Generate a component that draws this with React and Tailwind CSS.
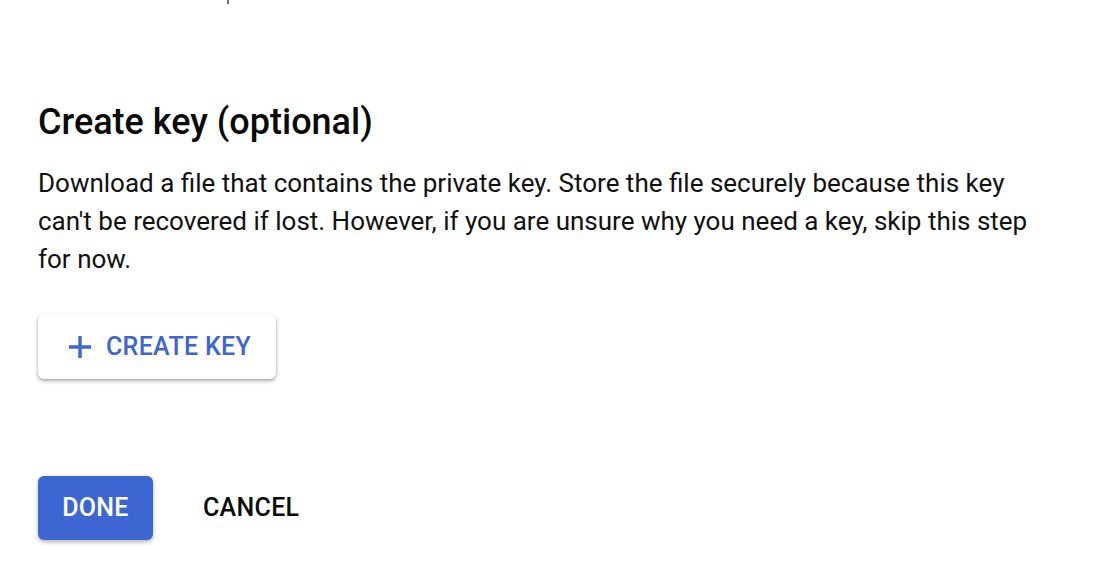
import React from "react";

function PlusIcon() {
  return (
    <svg width="24" height="24" viewBox="0 0 24 24" className="shrink-0">
      <path d="M12 1v22M1 12h22" stroke="currentColor" strokeWidth="3.4" fill="none" />
    </svg>
  );
}

export default function App() {
  return (
    <div
      className="w-[1106px] h-[580px] bg-white overflow-hidden px-[38px]"
      style={{ fontFamily: "Roboto, 'Liberation Sans', sans-serif" }}
    >
      {/* tail of the previous section's text */}
      <div className="h-[4px] relative">
        <div className="absolute left-[189px] top-0 w-[2px] h-[4px] bg-[#70757a]" />
      </div>

      <h2 className="mt-[98px] text-[36px] leading-[40px] font-medium text-[#0a0a0a]">
        Create key (optional)
      </h2>
      <p className="mt-[22px] w-[1012px] text-[26px] leading-[38px] text-[#111]">
        Download a file that contains the private key. Store the file securely because this key
        can't be recovered if lost. However, if you are unsure why you need a key, skip this step
        for now.
      </p>

      <button className="mt-[36px] flex items-center gap-[14px] h-[65px] w-[238px] pl-[30px] rounded-[6px] bg-white text-[#3d66d3] text-[25px] font-medium tracking-[0.3px] shadow-[0_2px_4px_rgba(0,0,0,0.3),0_1px_2px_rgba(0,0,0,0.12)]">
        <PlusIcon />
        <span>CREATE KEY</span>
      </button>

      <div className="mt-[97px] flex items-center gap-[25px]">
        <button className="h-[64px] w-[115px] rounded-[6px] bg-[#3d66d3] text-white text-[25px] font-medium tracking-[0.3px] shadow-[0_2px_4px_rgba(0,0,0,0.3)]">
          DONE
        </button>
        <button className="h-[64px] px-[25px] text-[#0a0a0a] text-[25px] font-medium tracking-[0.3px]">
          CANCEL
        </button>
      </div>
    </div>
  );
}
